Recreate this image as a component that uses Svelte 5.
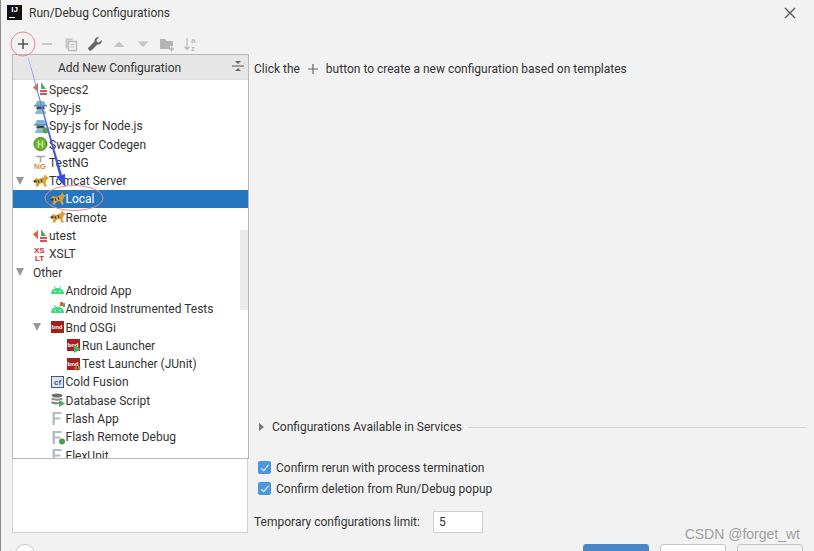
<script lang="ts">
	type Row = { label: string; icon?: string; level: number; open?: boolean; selected?: boolean };

	const rows: Row[] = [
		{ label: 'Specs2', icon: 'specs', level: 0 },
		{ label: 'Spy-js', icon: 'spy', level: 0 },
		{ label: 'Spy-js for Node.js', icon: 'spynode', level: 0 },
		{ label: 'Swagger Codegen', icon: 'swagger', level: 0 },
		{ label: 'TestNG', icon: 'testng', level: 0 },
		{ label: 'Tomcat Server', icon: 'tomcat', level: 0, open: true },
		{ label: 'Local', icon: 'tomcat', level: 1, selected: true },
		{ label: 'Remote', icon: 'tomcat', level: 1 },
		{ label: 'utest', icon: 'utest', level: 0 },
		{ label: 'XSLT', icon: 'xslt', level: 0 },
		{ label: 'Other', level: 0, open: true },
		{ label: 'Android App', icon: 'android', level: 1 },
		{ label: 'Android Instrumented Tests', icon: 'androidtest', level: 1 },
		{ label: 'Bnd OSGi', icon: 'bnd', level: 1, open: true },
		{ label: 'Run Launcher', icon: 'bndrun', level: 2 },
		{ label: 'Test Launcher (JUnit)', icon: 'bndtest', level: 2 },
		{ label: 'Cold Fusion', icon: 'cf', level: 1 },
		{ label: 'Database Script', icon: 'db', level: 1 },
		{ label: 'Flash App', icon: 'flash', level: 1 },
		{ label: 'Flash Remote Debug', icon: 'flashdebug', level: 1 },
		{ label: 'FlexUnit', icon: 'flash', level: 1 }
	];

	let rerun = $state(true);
	let deletion = $state(true);
	let limit = $state('5');
</script>

{#snippet cat()}
	<path d="M0 8l3-3 3 1 5-2 1-3 1.500 2.500 2.500 1-2.500 2.500-1 3 1.500 3.500h-2.500l-1.500-3.500-3 .5-2 3H2.500l1-4.500-2-1z" fill="#d9a13a" />
	<path d="M5 7l1 3M8 6l1 3" stroke="#333" stroke-width="1" fill="none" />
	<path d="M0 8l3-1 1 2-2 1z" fill="#444" />
{/snippet}

{#snippet split()}
	<path d="M5 2v9L0 6.500z" fill="#e0603c" />
	<path d="M8 1l5 7H8z" fill="#4caf64" />
	<rect x="7" y="9" width="7" height="5" fill="#e34d5c" />
	<path d="M7 11.500h7" stroke="#fff" />
{/snippet}

{#snippet spy()}
	<path d="M2 6h11L11 2H4z" fill="#7fb4cf" />
	<rect x="1" y="6" width="13" height="1.500" fill="#5e97b5" />
	<rect x="3.500" y="7.500" width="8" height="3" fill="#3d4b55" />
	<path d="M2 15c0-3 2-4.500 5.500-4.500S13 12 13 15z" fill="#88bcd6" />
{/snippet}

{#snippet icon(kind)}
	<svg class="ico" viewBox="0 0 16 16" width="16" height="16" aria-hidden="true">
		{#if kind === 'specs' || kind === 'utest'}
			{@render split()}
		{:else if kind === 'spy'}
			{@render spy()}
		{:else if kind === 'spynode'}
			{@render spy()}
			<circle cx="12.500" cy="12.500" r="3" fill="#5c9e52" />
		{:else if kind === 'swagger'}
			<circle cx="7.500" cy="8" r="6.500" fill="#6fb52c" stroke="#3f7d18" />
			<path d="M5.500 4.500v7M9.500 4.500v7M5.500 8h4" stroke="#d8f0b8" stroke-width="1.200" fill="none" />
		{:else if kind === 'testng'}
			<path d="M3 2.500h9M7.500 2.500V8" stroke="#a8a8a8" stroke-width="1.600" fill="none" />
			<text x="1" y="14.500" class="mini ng">NG</text>
		{:else if kind === 'tomcat'}
			{@render cat()}
		{:else if kind === 'xslt'}
			<text x="1" y="7" class="mini xs">XS</text>
			<text x="2" y="15" class="mini xs">LT</text>
		{:else if kind === 'android' || kind === 'androidtest'}
			<path d="M1 12c0-4 3-6 6.500-6s6.500 2 6.500 6z" fill="#3ddc84" />
			<path d="M4 4l2 3M11 4L9 7" stroke="#3ddc84" stroke-width="1" />
			<circle cx="5" cy="9.500" r=".8" fill="#fff" />
			<circle cx="10" cy="9.500" r=".8" fill="#fff" />
			{#if kind === 'androidtest'}
				<path d="M10 1h3v4h-3z" fill="#e0603c" />
				<path d="M13 2h2v4h-2z" fill="#4caf64" />
			{/if}
		{:else if kind === 'bnd' || kind === 'bndrun' || kind === 'bndtest'}
			<rect x="1" y="2" width="13" height="12" fill="#a32020" />
			<text x="1.500" y="10" class="mini bnd">bnd</text>
			{#if kind === 'bndrun'}
				<path d="M8 8l7 4-7 4z" fill="#4caf64" />
			{:else if kind === 'bndtest'}
				<path d="M11 9v6l-3-3z" fill="#e0603c" />
				<path d="M12 9l3 3-3 3z" fill="#4caf64" />
			{/if}
		{:else if kind === 'cf'}
			<rect x="1.500" y="2.500" width="12" height="11" fill="#dfe6f2" stroke="#3d5a8c" />
			<text x="4" y="11" class="mini cf">cf</text>
		{:else if kind === 'db'}
			<ellipse cx="7" cy="3.500" rx="5.500" ry="2" fill="#707070" />
			<path d="M1.500 5.500c2 1.500 9 1.500 11 0v2c-2 1.500-9 1.500-11 0zM1.500 9c2 1.500 9 1.500 11 0v2c-2 1.500-9 2-11 .5z" fill="#8a8a8a" />
			<path d="M9 8l6 3.500-6 3.500z" fill="#4caf64" />
		{:else if kind === 'flash' || kind === 'flashdebug'}
			<path d="M2.500 2h9v2h-6.500v3.500h5.500v2h-5.500V15h-2.500z" fill="#b4bcc4" />
			{#if kind === 'flashdebug'}
				<circle cx="12" cy="12.500" r="3" fill="#4c9a54" />
			{/if}
		{/if}
	</svg>
{/snippet}

<div class="dialog">
	<header class="title">
		<div class="logo"><span>IJ</span><i></i></div>
		<span class="title-text">Run/Debug Configurations</span>
		<svg class="close" viewBox="0 0 12 12" width="12" height="12" aria-hidden="true">
			<path d="M1 1l10 10M11 1L1 11" stroke="#555" stroke-width="1.300" />
		</svg>
	</header>

	<div class="toolbar">
		<button class="tool" aria-label="Add">
			<svg viewBox="0 0 16 16" width="16" height="16"><path d="M8 3v10M3 8h10" stroke="#555" stroke-width="1.600" /></svg>
		</button>
		<button class="tool" aria-label="Remove">
			<svg viewBox="0 0 16 16" width="16" height="16"><path d="M3 8h10" stroke="#bbb" stroke-width="1.600" /></svg>
		</button>
		<button class="tool" aria-label="Copy">
			<svg viewBox="0 0 16 16" width="16" height="16"><path d="M2.500 2.500h7v2h-5v8h-2z" fill="#c4c4c4" /><rect x="5.500" y="5.500" width="8" height="9" fill="none" stroke="#bbb" stroke-width="1.500" /><path d="M7.500 8.500h4M7.500 11h4" stroke="#bbb" /></svg>
		</button>
		<button class="tool" aria-label="Edit">
			<svg viewBox="0 0 16 16" width="16" height="16"><path d="M14.500 4l-2.500 2.500-2-.5-.5-2L12 1.500c-2.500-.8-5 1-4.500 4L1.500 11.500c-.6.600-.6 1.400 0 2l.9.9c.6.600 1.400.6 2 0l6-6c3 .6 4.900-1.800 4.100-4.400z" fill="#666" /></svg>
		</button>
		<button class="tool" aria-label="Move up">
			<svg viewBox="0 0 16 16" width="16" height="16"><path d="M2.500 11L8 5.500l5.500 5.500z" fill="#c4c4c4" /></svg>
		</button>
		<button class="tool" aria-label="Move down">
			<svg viewBox="0 0 16 16" width="16" height="16"><path d="M2.500 5.500L8 11l5.500-5.500z" fill="#c4c4c4" /></svg>
		</button>
		<button class="tool" aria-label="New folder">
			<svg viewBox="0 0 16 16" width="16" height="16"><path d="M1 3h5l1.500 2H14v5h-3v3H1z" fill="#b4b4b4" /><path d="M12.500 10.500v5M10 13h5" stroke="#b4b4b4" stroke-width="1.300" /></svg>
		</button>
		<button class="tool sort" aria-label="Sort">
			<svg viewBox="0 0 16 16" width="16" height="16">
				<path d="M4 2v11M1.500 10.500L4 13.500l2.500-3" stroke="#bbb" stroke-width="1.200" fill="none" />
				<text x="8" y="7" class="mini az">a</text>
				<text x="8" y="15" class="mini az">z</text>
			</svg>
		</button>
	</div>

	<div class="body">
		<aside class="left">
			<div class="popup">
				<div class="popup-head">
					<span>Add New Configuration</span>
					<svg class="collapse" viewBox="0 0 12 12" width="12" height="12" aria-hidden="true">
						<path d="M0 6h12" stroke="#555" />
						<path d="M3 1h6L6 4zM3 11h6L6 8z" fill="#666" />
					</svg>
				</div>
				<div class="tree">
					{#each rows as r}
						<div class="row" class:selected={r.selected} style="padding-left: {7 + r.level * 16.5}px">
							<span class="arrow">{#if r.open}<i></i>{/if}</span>
							{#if r.icon}{@render icon(r.icon)}{/if}
							<span class="label">{r.label}</span>
						</div>
					{/each}
					<div class="scroll"></div>
				</div>
			</div>
		</aside>

		<section class="right">
			<p class="hint">
				Click the
				<svg viewBox="0 0 12 12" width="12" height="12" aria-hidden="true"><path d="M6 1v10M1 6h10" stroke="#666" stroke-width="1.200" /></svg>
				button to create a new configuration based on templates
			</p>

			<div class="services">
				<i class="caret"></i>
				<span>Configurations Available in Services</span>
				<div class="rule"></div>
			</div>

			<label class="check"><input type="checkbox" bind:checked={rerun} /><b></b>Confirm rerun with process termination</label>
			<label class="check"><input type="checkbox" bind:checked={deletion} /><b></b>Confirm deletion from Run/Debug popup</label>

			<div class="limit">
				<span class="limit-label">Temporary configurations limit:</span>
				<input type="text" bind:value={limit} />
			</div>
		</section>
	</div>

	<footer class="foot">
		<div class="help">?</div>
		<div class="actions">
			<button class="btn primary">OK</button>
			<button class="btn">Cancel</button>
			<button class="btn muted">Apply</button>
		</div>
	</footer>

	<svg class="marks" viewBox="0 0 814 551" width="814" height="551" aria-hidden="true">
		<defs>
			<linearGradient id="shaft" x1="0" y1="0" x2="0" y2="1">
				<stop offset="0" stop-color="#9fb0f0" />
				<stop offset="0.6" stop-color="#4f68e0" />
				<stop offset="1" stop-color="#3550d8" />
			</linearGradient>
		</defs>
		<circle cx="23" cy="44" r="12" fill="none" stroke="#e98b8b" stroke-width="1" />
		<ellipse cx="74" cy="198" rx="29" ry="12.500" fill="none" stroke="#e58a96" stroke-width="1" />
		<path d="M28 58L59.500 176l2.500-.7L28.600 58z" fill="url(#shaft)" />
		<path d="M56 176.500l9-2.500 .5 13z" fill="#3550d8" />
	</svg>

	<div class="watermark">CSDN @forget_wt</div>
</div>

<style>
	:global(body) {
		margin: 0;
		background: #f2f2f2;
	}
	.dialog {
		position: relative;
		width: 814px;
		height: 551px;
		overflow: hidden;
		box-sizing: border-box;
		border-left: 1px solid #8c8c8c;
		background: #f2f2f2;
		color: #333;
		font-family: Roboto, sans-serif;
		font-size: 12px;
		line-height: 18px;
	}
	.title {
		display: flex;
		align-items: flex-start;
		height: 32px;
		box-sizing: border-box;
		padding: 4px 18px 0 6px;
	}
	.logo {
		position: relative;
		width: 15px;
		height: 15px;
		margin: 1px 7px 0 0;
		background: #111;
		color: #fff;
		font: bold 8px/10px 'Liberation Sans', sans-serif;
		text-align: center;
	}
	.logo i {
		position: absolute;
		left: 2px;
		bottom: 2px;
		width: 6px;
		height: 1px;
		background: #fff;
	}
	.title-text {
		flex: 1;
	}
	.close {
		flex: none;
		margin-top: 3px;
	}
	.toolbar {
		display: flex;
		height: 24px;
		padding-left: 10px;
	}
	.tool {
		display: flex;
		align-items: center;
		justify-content: center;
		width: 24px;
		height: 24px;
		padding: 0;
		border: none;
		background: none;
	}
	.mini {
		font-family: 'Liberation Sans', sans-serif;
		font-weight: bold;
	}
	.ng {
		font-size: 8px;
		fill: #e8883a;
	}
	.xs {
		font-size: 8px;
		fill: #d22f2f;
	}
	.bnd {
		font-size: 6px;
		fill: #fff;
	}
	.cf {
		font-size: 8px;
		fill: #3d5a8c;
	}
	.az {
		font-size: 8px;
		fill: #bbb;
	}
	.body {
		display: flex;
		height: 479px;
		margin-top: -2px;
	}
	.left {
		position: relative;
		box-sizing: border-box;
		width: 236px;
		height: 479px;
		margin-left: 11px;
		background: #fff;
		border: 1px solid #d0d0d0;
	}
	.popup {
		position: absolute;
		left: -1px;
		top: -1px;
		box-sizing: border-box;
		width: 237px;
		height: 405px;
		background: #fff;
		border: 1px solid #b8b8b8;
		overflow: hidden;
	}
	.popup-head {
		position: relative;
		height: 25px;
		background: #e6e6e6;
		border-bottom: 1px solid #dcdcdc;
		box-sizing: border-box;
		text-align: center;
		line-height: 26px;
		padding-right: 22px;
	}
	.collapse {
		position: absolute;
		right: 4px;
		top: 5px;
	}
	.tree {
		position: relative;
	}
	.row {
		display: flex;
		align-items: center;
		box-sizing: border-box;
		height: 18.300px;
		white-space: nowrap;
	}
	.row.selected {
		background: #2675bf;
		color: #fff;
	}
	.label {
		padding-top: 1px;
	}
	.arrow {
		flex: none;
		width: 13px;
		height: 10px;
	}
	.arrow i {
		display: block;
		width: 0;
		height: 0;
		margin: 1px 0 0 -4px;
		border-left: 4.500px solid transparent;
		border-right: 4.500px solid transparent;
		border-top: 8px solid #999;
	}
	.ico {
		flex: none;
	}
	.scroll {
		position: absolute;
		right: 0;
		top: 150px;
		width: 8px;
		height: 80px;
		background: #ebebeb;
	}
	.right {
		flex: 1;
		min-width: 0;
		padding: 0 8px 0 6px;
	}
	.hint {
		display: flex;
		align-items: center;
		gap: 4px;
		margin: 0;
		height: 27px;
		padding-top: 2px;
		box-sizing: border-box;
		white-space: pre;
	}
	.services {
		display: flex;
		align-items: center;
		height: 18px;
		margin-top: 337px;
		padding-left: 5px;
	}
	.caret {
		width: 0;
		height: 0;
		margin-right: 8px;
		border-top: 4px solid transparent;
		border-bottom: 4px solid transparent;
		border-left: 5px solid #777;
	}
	.rule {
		flex: 1;
		margin-left: 6px;
		border-top: 1px solid #d4d4d4;
	}
	.check {
		display: flex;
		align-items: center;
		height: 21px;
		padding-left: 4px;
	}
	.services + .check {
		margin-top: 21px;
	}
	.check input {
		position: absolute;
		opacity: 0;
		width: 0;
		height: 0;
	}
	.check b {
		position: relative;
		width: 13px;
		height: 13px;
		margin-right: 5px;
		border-radius: 2px;
		background: #4a97e0;
	}
	.check b::after {
		content: '';
		position: absolute;
		left: 4.500px;
		top: 1.500px;
		width: 3px;
		height: 6.500px;
		border: solid #fff;
		border-width: 0 1.700px 1.700px 0;
		transform: rotate(40deg);
	}
	.limit {
		display: flex;
		align-items: center;
		margin-top: 12px;
		height: 22px;
	}
	.limit-label {
		width: 179px;
		white-space: nowrap;
	}
	.limit input {
		box-sizing: border-box;
		width: 50px;
		height: 22px;
		padding: 0 5px;
		border: 1px solid #cfcfcf;
		background: #fff;
		color: inherit;
		font: inherit;
		outline: none;
	}
	.foot {
		position: relative;
		display: flex;
		justify-content: space-between;
		padding: 11px 11px 0 14px;
	}
	.help {
		box-sizing: border-box;
		width: 20px;
		height: 20px;
		border: 1px solid #c4c4c4;
		border-radius: 50%;
		background: #fff;
		text-align: center;
		color: #555;
		font-weight: bold;
		padding-top: 2px;
	}
	.actions {
		display: flex;
		gap: 11px;
	}
	.btn {
		box-sizing: border-box;
		width: 66px;
		height: 24px;
		padding: 4px 0 0;
		border: 1px solid #c4c4c4;
		border-radius: 3px;
		background: #fff;
		color: #333;
		font: inherit;
		line-height: 18px;
		display: block;
	}
	.btn.primary {
		border-color: #4a86c5;
		background: #4a86c5;
		color: #fff;
	}
	.btn.muted {
		background: #f2f2f2;
		color: #999;
	}
	.marks {
		position: absolute;
		left: -1px;
		top: 0;
		pointer-events: none;
	}
	.watermark {
		position: absolute;
		right: 14px;
		top: 526px;
		color: #a0a0a0;
		font: 14px/16px 'Liberation Sans', sans-serif;
	}
</style>
